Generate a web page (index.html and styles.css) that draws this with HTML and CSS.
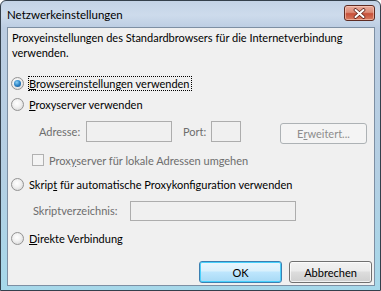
FILE: index.html
```html
<!DOCTYPE html>
<html lang="de">
<head>
    <meta charset="UTF-8">
    <title>Netzwerkeinstellungen</title>
    <link rel="stylesheet" href="styles.css">
</head>
<body>
    <div class="window">
        <div class="titlebar">
            <span class="title">Netzwerkeinstellungen</span>
            <button class="close-btn" aria-label="Schließen">
                <svg width="13" height="11" viewBox="0 0 13 11">
                    <path d="M2.5 2 L10.5 9 M10.5 2 L2.5 9" stroke="#5a2018" stroke-width="3.6" stroke-linecap="round"/>
                    <path d="M2.5 2 L10.5 9 M10.5 2 L2.5 9" stroke="#ffffff" stroke-width="2.1" stroke-linecap="round"/>
                </svg>
            </button>
        </div>
        <div class="client">
            <p class="intro">Proxyeinstellungen des Standardbrowsers für die Internetverbindung verwenden.</p>

            <div class="option first">
                <span class="radio checked"></span>
                <span class="focus"><u>B</u>rowsereinstellungen verwenden</span>
            </div>

            <div class="option second">
                <span class="radio"></span>
                <span><u>P</u>roxyserver verwenden</span>
            </div>

            <div class="proxy-row">
                <span class="dim addr-label">Adresse:</span>
                <span class="field addr"></span>
                <span class="dim port-label">Port:</span>
                <span class="field port"></span>
                <span class="btn disabled">E<u>r</u>weitert...</span>
            </div>

            <div class="check-row">
                <span class="checkbox"></span>
                <span class="dim">Prox<u>y</u>server für lokale Adressen umgehen</span>
            </div>

            <div class="option script">
                <span class="radio"></span>
                <span>Skrip<u>t</u> für automatische Proxykonfiguration verwenden</span>
            </div>

            <div class="script-row">
                <span class="dim script-label">Skriptverzeichnis:</span>
                <span class="field script-path"></span>
            </div>

            <div class="option direct">
                <span class="radio"></span>
                <span><u>D</u>irekte Verbindung</span>
            </div>

            <div class="buttons">
                <span class="btn default">OK</span>
                <span class="btn">Abbrechen</span>
            </div>
        </div>
    </div>
</body>
</html>
```

FILE: styles.css
```css
html, body {
    margin: 0;
    padding: 0;
}

body {
    width: 381px;
    height: 291px;
    font-family: Lato, "Noto Sans", sans-serif;
    font-size: 11px;
    color: #000;
    overflow: hidden;
}

.window {
    box-sizing: border-box;
    width: 381px;
    height: 291px;
    border: 1px solid #34404c;
    border-radius: 6px 6px 0 0;
    background: linear-gradient(to bottom, #c3d3e6 0px, #cddbec 14px, #bccde2 27px, #b4cfe3 60%, #a6d8ea 100%);
    padding: 0 5px 4px 6px;
    display: flex;
    flex-direction: column;
}

.titlebar {
    height: 26px;
    display: flex;
    align-items: flex-start;
    justify-content: space-between;
    flex-shrink: 0;
}

.title {
    margin-top: 7px;
    line-height: 14px;
    font-size: 11.5px;
}

.close-btn {
    box-sizing: border-box;
    width: 31px;
    height: 16px;
    margin-top: 4px;
    border: 1px solid #5e2b22;
    border-radius: 3px;
    background: linear-gradient(to bottom, #e9ab9b 0%, #dc8c78 45%, #c7503a 55%, #d77c62 100%);
    box-shadow: inset 0 0 0 1px rgba(255, 215, 200, 0.55);
    display: flex;
    align-items: center;
    justify-content: center;
    padding: 0;
}

.client {
    flex: 1;
    background: #f0f0f0;
    border: 1px solid #7d8fa3;
    display: flex;
    flex-direction: column;
}

.intro {
    margin: 2px 0 0 4px;
    line-height: 15px;
    width: 345px;
}

.option {
    display: flex;
    align-items: center;
    height: 16px;
    padding-left: 3px;
}

.option.first {
    margin-top: 15px;
}

.option.second {
    margin-top: 5px;
}

.radio {
    box-sizing: border-box;
    width: 13px;
    height: 13px;
    border-radius: 50%;
    border: 1px solid #939393;
    background: radial-gradient(circle at 45% 40%, #ffffff 0%, #f2f2f2 40%, #d0d0d0 100%);
    margin-right: 5px;
    position: relative;
    flex-shrink: 0;
}

.radio.checked::after {
    content: "";
    position: absolute;
    left: 2px;
    top: 2px;
    width: 7px;
    height: 7px;
    border-radius: 50%;
    background: radial-gradient(circle at 40% 35%, #8bd0f5 0%, #2b83c6 50%, #144c83 100%);
}

.focus {
    outline: 1px dotted #000;
    padding-right: 1px;
}

.dim {
    color: #6d6d6d;
}

.proxy-row {
    display: flex;
    align-items: flex-start;
    margin-top: 9px;
    padding-left: 31px;
    height: 23px;
}

.proxy-row .dim {
    line-height: 21px;
}

.addr-label {
    width: 47px;
}

.port-label {
    width: 28px;
    margin-left: 11px;
}

.field {
    box-sizing: border-box;
    height: 21px;
    border: 1px solid #adadad;
    background: #f0f0f0;
}

.addr {
    width: 86px;
}

.port {
    width: 30px;
}

.btn {
    box-sizing: border-box;
    display: flex;
    align-items: center;
    justify-content: center;
    width: 87px;
    height: 21px;
    border: 1px solid #707070;
    border-radius: 3px;
    background: linear-gradient(to bottom, #f2f2f2 0%, #ebebeb 45%, #dddddd 50%, #cfcfcf 100%);
    box-shadow: inset 0 0 0 1px rgba(255, 255, 255, 0.7);
}

.btn.disabled {
    color: #8d8d8d;
    background: #f4f4f4;
    border-color: #adb2b5;
    box-shadow: none;
    margin-left: 39px;
    margin-top: 2px;
}

.check-row {
    display: flex;
    align-items: center;
    height: 16px;
    margin-top: 8px;
    padding-left: 24px;
}

.checkbox {
    box-sizing: border-box;
    width: 12px;
    height: 12px;
    border: 1px solid #b1b1b1;
    background: #f4f4f4;
    margin-right: 5px;
}

.option.script {
    margin-top: 8px;
}

.script-row {
    display: flex;
    align-items: center;
    height: 21px;
    margin-top: 8px;
    padding-left: 25px;
}

.script-label {
    width: 97px;
}

.script-path {
    width: 166px;
    height: 20px;
}

.option.direct {
    margin-top: 9px;
}

.buttons {
    margin-top: auto;
    margin-bottom: 2px;
    padding-right: 2px;
    display: flex;
    justify-content: flex-end;
    gap: 7px;
}

.buttons .btn {
    width: 83px;
    height: 22px;
}

.btn.default {
    border-color: #3c7fb1;
    box-shadow: inset 0 0 0 1px #48d0fb;
    background: linear-gradient(to bottom, #eaf6fd 0%, #d9f0fc 45%, #bee6fd 50%, #a7d9f5 100%);
}
```
